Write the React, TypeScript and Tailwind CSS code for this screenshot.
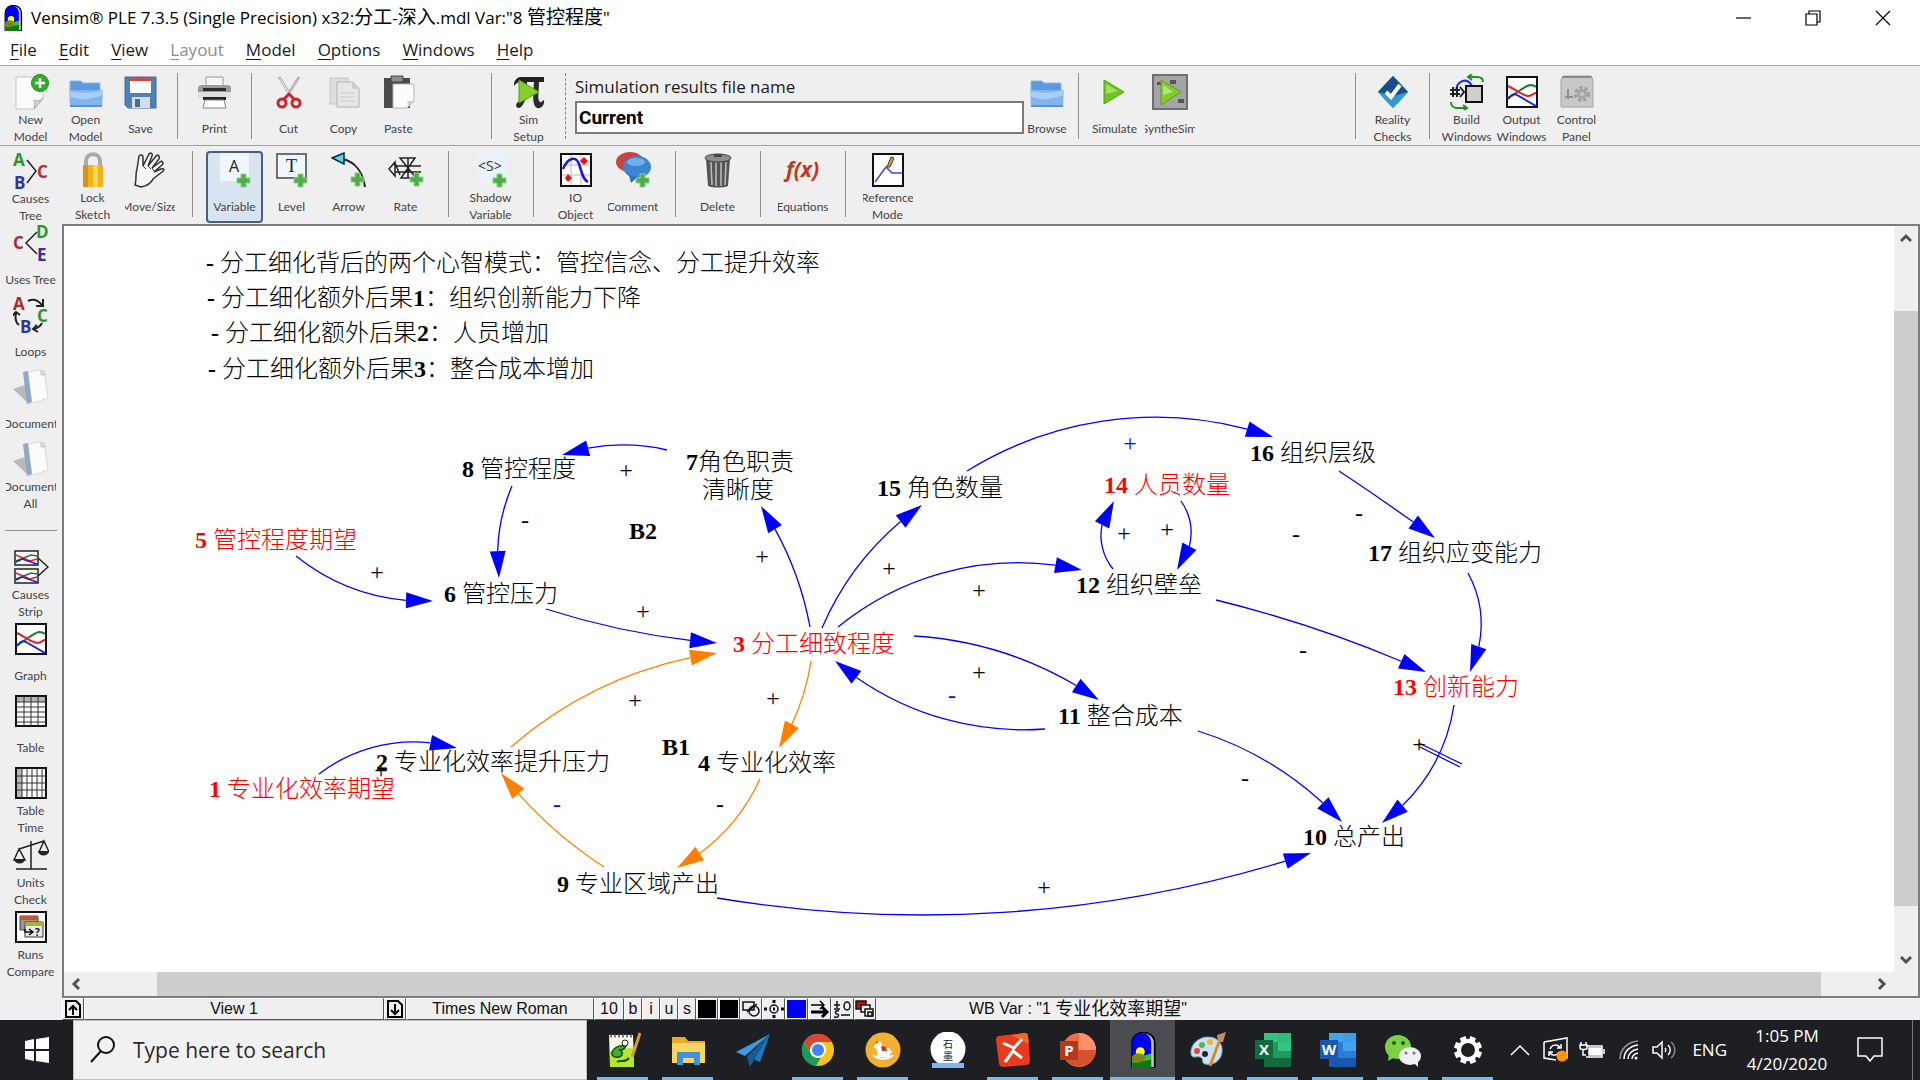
import type { ReactNode } from "react";
import clsx from "clsx";

const UI = "font-['Open_Sans','Noto_Sans_CJK_SC',sans-serif]";

/* ---------- ICONS ---------- */

const Plus = ({ x = 22, y = 24 }: { x?: number; y?: number }) => (
  <path
    transform={`translate(${x} ${y})`}
    d="M4 0h5v4h4v5H9v4H4V9H0V4h4z"
    fill="#4fae45"
    stroke="#8fd08a"
    strokeWidth="1"
  />
);

const Svg = ({ children, size = 36 }: { children: ReactNode; size?: number }) => (
  <svg width={size} height={size} viewBox="0 0 36 36" fill="none" aria-hidden="true" className="shrink-0">
    {children}
  </svg>
);

const NewIcon = () => (
  <Svg>
    <path d="M3 3h27v22l-9 10H3z" fill="#fbfbfb" stroke="#c4c4c4" />
    <path d="M21 35c1-4 1-7 0-9 3 1 6 1 9-2z" fill="#d5d5d5" stroke="#aaa" />
    <circle cx="27" cy="9" r="8.500" fill="#2fae2a" stroke="#1d8a1b" />
    <path d="M27 4v10M22 9h10" stroke="#fff" strokeWidth="2.500" />
  </Svg>
);

const FolderIcon = () => (
  <Svg>
    <path d="M2 7h11l2 2h17v12H2z" fill="#5a9be0" stroke="#8db9ea" />
    <path d="M1 16h34l-1 17H2z" fill="#82b4ee" />
    <path d="M1 17c12 3 22 2 34-1v5c-12 5-22 5-34 2z" fill="#a9cdf5" />
    <path d="M2 32h32" stroke="#5b93d6" strokeWidth="2" />
  </Svg>
);

const SaveIcon = () => (
  <Svg>
    <path d="M2 3h31v31H5l-3-3z" fill="#4f81b5" stroke="#3f6c9b" />
    <path d="M7 3h21v16H7z" fill="#fafafa" />
    <path d="M7 3h21v4H7z" fill="#c9484b" />
    <path d="M9 23h18v11H9z" fill="#d7dde4" />
    <path d="M12 25h5v8h-5z" fill="#4a6d92" />
  </Svg>
);

const PrintIcon = () => (
  <Svg>
    <path d="M9 3h17v10H9z" fill="#f5f5f5" stroke="#999" />
    <path d="M1 14c0-2 2-3 4-3h25c3 0 4 1 4 3v9H1z" fill="#9b9b9b" />
    <path d="M6 14h23v3H6z" fill="#2d2d2d" />
    <path d="M1 18h33v6H1z" fill="#dedede" />
    <path d="M6 23h23v3H6z" fill="#222" />
    <path d="M8 26h19l2 8H6z" fill="#fff" stroke="#888" />
  </Svg>
);

const CutIcon = () => (
  <Svg>
    <path d="M8 3l12 19M28 3L16 22" stroke="#b9b9b9" strokeWidth="3" />
    <path d="M9 5l11 17" stroke="#eee" strokeWidth="1" />
    <circle cx="11" cy="29" r="4" stroke="#c5282f" strokeWidth="3" />
    <circle cx="25" cy="29" r="4" stroke="#c5282f" strokeWidth="3" />
    <path d="M13 25l5-5 5 5" stroke="#c5282f" strokeWidth="3" />
  </Svg>
);

const CopyIcon = () => (
  <Svg>
    <path d="M4 4h18v26H4z" fill="#dedede" stroke="#c4c4c4" />
    <path d="M11 8h16l6 6v19H11z" fill="#e6e6e6" stroke="#b3b3b3" />
    <path d="M27 8v6h6" fill="#d4d4d4" stroke="#bbb" />
    <path d="M14 19h14M14 23h14M14 27h14" stroke="#cccccc" />
  </Svg>
);

const PasteIcon = () => (
  <Svg>
    <path d="M3 4h26v30H3z" fill="#4a4a4a" />
    <path d="M10 2h12v6H10z" fill="#8d8d8d" stroke="#444" />
    <path d="M12 10h21v17l-7 7H12z" fill="#fcfcfc" stroke="#b5b5b5" />
    <path d="M26 34c1-3 1-5 0-7h7z" fill="#cfcfcf" />
  </Svg>
);

const SimSetupIcon = () => (
  <Svg>
    <path d="M3 9c2-5 4-6 8-6h22v5H12c-4 0-6 0-9 4z" fill="#222" />
    <path d="M11 8h5c0 12-1 20-6 25-4 3-7-2-3-5 4-4 4-12 4-20zM23 8h5c0 10-2 18 1 20 2 1 3-2 4-2 1 5-3 9-7 8-5-2-4-14-3-26z" fill="#2b2b2b" />
    <path d="M8 6l20 12L8 29z" fill="#86cf2b" stroke="#5c9e18" />
  </Svg>
);

const PlayIcon = () => (
  <Svg>
    <path d="M7 6l20 12L7 30z" fill="#6fc41d" stroke="#52a012" />
    <path d="M9 10l12 7-12 3z" fill="#a4e05b" />
  </Svg>
);

const SyntheIcon = () => (
  <Svg>
    <path d="M1 1h34v34H1z" fill="#a5a5a5" stroke="#6f6f6f" strokeWidth="2" />
    <path d="M5 8h6v3H5zM18 6h6v4h-6zM26 25h6v4h-6z" fill="#555" />
    <path d="M9 6l20 12L9 31z" fill="#82cc2a" stroke="#5c9e18" />
    <path d="M11 11l10 7-10 3z" fill="#b4e777" />
  </Svg>
);

const RealityIcon = () => (
  <Svg>
    <path d="M18 2l15 16-15 16L3 18z" fill="#1d5f9d" stroke="#9fb3c6" />
    <path d="M3 18h30L18 34z" fill="#2f9cc9" />
    <path d="M3 18l15 4 15-4-15-16z" fill="#174f88" />
    <path d="M11 18l5 5 9-12" stroke="#fff" strokeWidth="4" />
  </Svg>
);

const BuildIcon = () => (
  <Svg>
    <path d="M7 17C8 6 18 3 23 12" stroke="#2a2af0" strokeWidth="2" />
    <path d="M1 16h10M1 20h10M4 13v10M8 13v10M11 13l4 5-4 5" stroke="#222" strokeWidth="2" />
    <path d="M17 12h16v16H17z" fill="#cfcfcf" stroke="#111" strokeWidth="2" />
    <path d="M34 8c0-4-3-5-6-5h-9m4-3l-4 3 4 3M2 28c0 4 3 6 6 6h10m-4-3l4 3-4 3" stroke="#1c941c" strokeWidth="2" />
  </Svg>
);

const GraphIcon = () => (
  <Svg>
    <path d="M3 3h30v30H3z" fill="#fff" stroke="#111" strokeWidth="2" />
    <path d="M4 24C12 20 20 12 26 11c3 0 5 1 6 2" stroke="#15802a" strokeWidth="2" />
    <path d="M4 12c7 3 13 9 20 10 3 0 6-3 8-3" stroke="#ec1c1c" strokeWidth="2" />
    <path d="M4 25c3-4 6-6 9-4l19 11" stroke="#1c1cec" strokeWidth="2" />
  </Svg>
);

const ControlIcon = () => (
  <Svg>
    <path d="M4 2h28l2 4v27H2V6z" fill="#c8c8c8" stroke="#a2a2a2" />
    <path d="M4 2h28l1 2H3z" fill="#888" />
    <circle cx="23" cy="20" r="6" stroke="#a0a0a0" strokeWidth="4" strokeDasharray="3 2" />
    <circle cx="23" cy="20" r="5" fill="#a6a6a6" />
    <circle cx="23" cy="20" r="2" fill="#c8c8c8" />
    <path d="M9 15v10M6 23h8" stroke="#909090" strokeWidth="2" />
  </Svg>
);

const letter = "font-['Open_Sans',sans-serif] font-bold text-[17px]";

const CausesTreeIcon = () => (
  <Svg>
    <text x="0" y="13" fill="#2d942d" className={letter}>A</text>
    <text x="1" y="36" fill="#33339c" className={letter}>B</text>
    <text x="24" y="25" fill="#b52c35" className={letter}>C</text>
    <path d="M14 7l9 11-9 12" stroke="#222" strokeWidth="1.500" />
  </Svg>
);

const UsesTreeIcon = () => (
  <Svg>
    <text x="0" y="24" fill="#a52c35" className={letter}>C</text>
    <text x="23" y="13" fill="#2d942d" className={letter}>D</text>
    <text x="24" y="36" fill="#33339c" className={letter}>E</text>
    <path d="M24 7L13 18l11 11" stroke="#222" strokeWidth="1.500" />
  </Svg>
);

const LoopsIcon = () => (
  <Svg>
    <text x="0" y="13" fill="#a52c35" className={letter}>A</text>
    <text x="24" y="25" fill="#2d942d" className={letter}>C</text>
    <text x="7" y="36" fill="#33339c" className={letter}>B</text>
    <path d="M15 4c6-3 10-1 14 4m1-6v7h-7M29 26c-2 4-4 5-8 6m3-4l-4 4 5 3M6 28c-4-3-4-7-3-12m-4 3l4-4 4 3" stroke="#222" strokeWidth="2" />
  </Svg>
);

const LockIcon = () => (
  <Svg>
    <path d="M11 16V9c0-9 14-9 14 0v7" stroke="#a9a9a9" strokeWidth="4" />
    <path d="M8 13h20v22H8z" fill="#efb41c" />
    <path d="M8 13h5v22H8z" fill="#d8920d" />
    <path d="M18 13h5v22h-5z" fill="#f9d659" />
  </Svg>
);

const HandIcon = () => (
  <Svg>
    <path
      d="M3 33c2-7 0-11 2-16l2-13c1-2 4-1 4 1v9l6-12c2-2 4 0 3 2l-4 10 8-10c2-2 4 0 3 3l-7 9 8-6c2-2 4 1 2 3l-8 7 7-3c3-1 4 1 1 3l-9 7c-2 5-7 7-12 8z"
      fill="#f6f6f6"
      stroke="#333"
      strokeWidth="1.500"
    />
    <path d="M11 14l3 3M16 14l3 3M20 16l2 3" stroke="#333" />
  </Svg>
);

const VariableIcon = () => (
  <Svg>
    <path d="M3 1h29v28H3z" fill="#eff6fe" />
    <text x="12" y="20" fill="#222" className="font-['Open_Sans',sans-serif] text-[16px]">A</text>
    <Plus x={20} y={22} />
  </Svg>
);

const LevelIcon = () => (
  <Svg>
    <path d="M3 2h29v24H3z" fill="#eef5fd" stroke="#444" strokeWidth="1.500" />
    <text x="12" y="20" fill="#222" className="font-['Liberation_Serif',serif] text-[18px]">T</text>
    <Plus x={20} y={22} />
  </Svg>
);

const ArrowIcon = () => (
  <Svg>
    <path d="M12 7c12 3 20 13 22 28" stroke="#222" strokeWidth="2" />
    <path d="M1 6l12-5v11z" fill="#4fe0e6" stroke="#123" strokeWidth="1.500" />
    <Plus x={20} y={21} />
  </Svg>
);

const RateIcon = () => (
  <Svg>
    <path d="M1 17l6-7v14zM7 14h26M7 20h26M12 6h15L13 26h15zM20 6v20M7 11l5 12" stroke="#222" strokeWidth="1.500" />
    <Plus x={22} y={21} />
  </Svg>
);

const ShadowIcon = () => (
  <Svg>
    <path d="M4 1h29v28H4z" fill="#e8f2fb" />
    <text x="5" y="19" fill="#333" className="font-['Open_Sans',sans-serif] text-[14px]">&lt;S&gt;</text>
    <Plus x={20} y={22} />
  </Svg>
);

const IoIcon = () => (
  <Svg>
    <path d="M3 2h30v32H3z" fill="#fff" stroke="#111" strokeWidth="2" />
    <path d="M4 13h28M4 23h28M13 3v30M23 3v30" stroke="#b8b8b8" />
    <path d="M5 17C10 5 18 4 21 12c3 9 4 16 9 18" stroke="#1818dd" strokeWidth="2.500" />
    <path d="M22 9l4-4 4 4-4 4zM7 26l3-4 4 4-4 4z" fill="#e31212" />
  </Svg>
);

const CommentIcon = () => (
  <Svg>
    <ellipse cx="15" cy="10" rx="14" ry="10" fill="#c9433f" />
    <ellipse cx="22" cy="15" rx="14" ry="11" fill="#3b86d0" />
    <path d="M14 23l2 8 7-6z" fill="#2f74bb" />
    <ellipse cx="21" cy="10" rx="9" ry="4" fill="#71b0e8" />
    <Plus x={21} y={22} />
  </Svg>
);

const TrashIcon = () => (
  <Svg>
    <path d="M6 7h24l-2 27c-5 2-15 2-20 0z" fill="#555" />
    <path d="M11 10l1 23M16 10v24M21 10v24M26 10l-1 23" stroke="#c0c0c0" strokeWidth="1.500" />
    <ellipse cx="18" cy="6" rx="13" ry="4" fill="#8d8d8d" stroke="#444" />
    <path d="M14 2h8v3h-8z" fill="#444" />
  </Svg>
);

const EquationsIcon = () => (
  <span className="font-['Open_Sans',sans-serif] text-[21px] font-bold italic text-[#c5361c]">f(x)</span>
);

const ReferenceIcon = () => (
  <Svg>
    <path d="M3 2h30v32H3z" fill="#fff" stroke="#111" strokeWidth="2" />
    <path d="M5 30l11-15 6 6h10" stroke="#4646d8" strokeWidth="1.500" />
    <path d="M17 15l4-10 3 1-4 9z" fill="#d79b45" stroke="#4a3520" />
  </Svg>
);

const DocIcon = () => (
  <Svg>
    <path d="M0 20l15-5v19z" fill="#b9b9b9" />
    <path d="M12 3l19-2 4 28-18 6z" fill="#fbfbfc" stroke="#d9d9dc" />
    <path d="M10 3l5-1 4 31-5 2z" fill="#8ea9c4" />
    <path d="M28 1l5 5h-5z" fill="#e2e2e2" stroke="#c5c5c5" />
  </Svg>
);

const StripIcon = () => (
  <Svg>
    {[2, 20].map((y) => (
      <g key={y} transform={`translate(0 ${y})`}>
        <path d="M2 0h23v14H2z" fill="#fff" stroke="#222" strokeWidth="1.500" />
        <path d="M3 10l15-6 6 1" stroke="#15802a" strokeWidth="1.500" />
        <path d="M3 4l14 6 7-2" stroke="#ec1c1c" strokeWidth="1.500" />
        <path d="M3 11l6-3 15 5" stroke="#1c1cec" strokeWidth="1.500" />
      </g>
    ))}
    <path d="M25 9l10 9-10 9" stroke="#222" strokeWidth="1.500" />
  </Svg>
);

const TableIcon = ({ time = false }: { time?: boolean }) => (
  <Svg>
    <path d="M3 3h30v30H3z" fill="#fff" stroke="#111" strokeWidth="2" />
    <path d={time ? "M4 4h5v28H4z" : "M4 4h28v5H4z"} fill="#b5b5b5" />
    <path
      d={time ? "M9 3v30M14 3v30M19 3v30M24 3v30M29 3v30M3 11h30M3 18h30M3 25h30" : "M3 9h30M3 14h30M3 19h30M3 24h30M3 29h30M11 3v30M18 3v30M25 3v30"}
      stroke="#333"
    />
  </Svg>
);

const UnitsIcon = () => (
  <Svg>
    <path d="M18 4v28M3 32h31M6 12l25-8M6 12L1 23h11zM31 4l-5 11h10z" stroke="#222" strokeWidth="1.500" />
    <path d="M1 22h11c-1 6-10 6-11 0zM25 14h11c-1 6-10 6-11 0z" fill="#222" />
  </Svg>
);

const RunsIcon = () => (
  <Svg>
    <path d="M3 3h30v30H3z" fill="#fff" stroke="#111" strokeWidth="2" />
    <path d="M7 7h18v14H7z" fill="#999" stroke="#444" />
    <path d="M7 7h18v4H7z" fill="#c4572f" />
    <path d="M12 13h18v15H12z" fill="#e8e8e8" stroke="#333" />
    <path d="M12 13h18v4H12z" fill="#a5b52b" />
    <path d="M12 20v3h7m-3-3l4 3-4 3" stroke="#111" strokeWidth="1.500" />
    <text x="22" y="27" fill="#111" className="font-['Open_Sans',sans-serif] text-[10px] font-bold">?</text>
  </Svg>
);

const VensimIcon = ({ className }: { className?: string }) => (
  <svg viewBox="0 0 28 40" className={className} aria-hidden="true">
    <path d="M2 40V12C2-3 27-3 27 12v28z" fill="#c4c4c4" stroke="#000" strokeWidth="2" />
    <path d="M2 40V12C2-2 23-2 23 12v28z" fill="#0000f5" />
    <circle cx="11" cy="22" r="5" fill="#ffff1a" />
    <path d="M2 27c6-6 10-3 14-1l7-2v16H2z" fill="#35c62a" />
    <path d="M2 27c6-4 11-3 15 2-4 5-10 6-15 4z" fill="#86801a" />
    <path d="M2 34c8 1 12-3 21-3v9H2z" fill="#0b7a12" />
  </svg>
);

/* ---------- TOOLBAR PARTS ---------- */

type Tool = { icon: ReactNode; lines: string[]; w?: string; active?: boolean };

const ToolButton = ({ icon, lines, w = "w-[55px]", active }: Tool) => (
  <button
    type="button"
    className={clsx(
      "flex h-[72px] shrink-0 flex-col items-center",
      w,
      active && "rounded-sm bg-[#d9e4f1] outline-2 -outline-offset-2 outline-[#4a5f86]"
    )}
  >
    <span className="flex h-[38px] items-center justify-center">{icon}</span>
    <span className="flex h-[34px] w-[50px] flex-col items-center justify-center overflow-hidden font-['Lato',sans-serif] text-[12px] leading-[17px] text-[#444]">
      {lines.map((line) => (
        <span key={line} className="whitespace-nowrap">
          {line}
        </span>
      ))}
    </span>
  </button>
);

const Sep = ({ w = "w-[19px]", dotted = false }: { w?: string; dotted?: boolean }) => (
  <div className={clsx("flex h-[66px] shrink-0 justify-center", w)}>
    <div className={clsx("h-full border-l", dotted ? "border-dashed border-[#888]" : "border-[#8f8f8f]")} />
  </div>
);

const sideTop: Tool[] = [
  { icon: <CausesTreeIcon />, lines: ["Causes", "Tree"] },
  { icon: <UsesTreeIcon />, lines: ["Uses Tree"] },
  { icon: <LoopsIcon />, lines: ["Loops"] },
  { icon: <DocIcon />, lines: ["Document"] },
  { icon: <DocIcon />, lines: ["Document", "All"] },
];

const sideBottom: Tool[] = [
  { icon: <StripIcon />, lines: ["Causes", "Strip"] },
  { icon: <GraphIcon />, lines: ["Graph"] },
  { icon: <TableIcon />, lines: ["Table"] },
  { icon: <TableIcon time />, lines: ["Table", "Time"] },
  { icon: <UnitsIcon />, lines: ["Units", "Check"] },
  { icon: <RunsIcon />, lines: ["Runs", "Compare"] },
];

const sketchGroups: Tool[][] = [
  [
    { icon: <LockIcon />, lines: ["Lock", "Sketch"] },
    { icon: <HandIcon />, lines: ["Move/Size"] },
  ],
  [
    { icon: <VariableIcon />, lines: ["Variable"], active: true },
    { icon: <LevelIcon />, lines: ["Level"] },
    { icon: <ArrowIcon />, lines: ["Arrow"] },
    { icon: <RateIcon />, lines: ["Rate"] },
  ],
  [{ icon: <ShadowIcon />, lines: ["Shadow", "Variable"] }],
  [
    { icon: <IoIcon />, lines: ["IO", "Object"] },
    { icon: <CommentIcon />, lines: ["Comment"] },
  ],
  [{ icon: <TrashIcon />, lines: ["Delete"] }],
  [{ icon: <EquationsIcon />, lines: ["Equations"] }],
  [{ icon: <ReferenceIcon />, lines: ["Reference", "Mode"] }],
];

/* ---------- DIAGRAM ---------- */

// x = left edge, y = middle of the text line
type Label = { x: number; y: number; num?: string; text: string; red?: boolean };

const labels: Label[] = [
  { x: 142, y: 37, num: "- ", text: "分工细化背后的两个心智模式：管控信念、分工提升效率" },
  { x: 398, y: 243, num: "8 ", text: "管控程度" },
  { x: 622, y: 236, num: "7", text: "角色职责" },
  { x: 638, y: 264, text: "清晰度" },
  { x: 131, y: 314, num: "5 ", text: "管控程度期望", red: true },
  { x: 565, y: 305, num: "B2", text: "" },
  { x: 380, y: 368, num: "6 ", text: "管控压力" },
  { x: 669, y: 418, num: "3 ", text: "分工细致程度", red: true },
  { x: 312, y: 536, num: "2 ", text: "专业化效率提升压力" },
  { x: 145, y: 563, num: "1 ", text: "专业化效率期望", red: true },
  { x: 598, y: 521, num: "B1", text: "" },
  { x: 634, y: 537, num: "4 ", text: "专业化效率" },
  { x: 493, y: 658, num: "9 ", text: "专业区域产出" },
  { x: 813, y: 262, num: "15 ", text: "角色数量" },
  { x: 1186, y: 227, num: "16 ", text: "组织层级" },
  { x: 1040, y: 259, num: "14 ", text: "人员数量", red: true },
  { x: 1012, y: 359, num: "12 ", text: "组织壁垒" },
  { x: 1304, y: 327, num: "17 ", text: "组织应变能力" },
  { x: 1329, y: 461, num: "13 ", text: "创新能力", red: true },
  { x: 994, y: 490, num: "11 ", text: "整合成本" },
  { x: 1239, y: 611, num: "10 ", text: "总产出" },
];

const notes = [
  { x: 143, y: 72, n: "1", text: "组织创新能力下降" },
  { x: 147, y: 107, n: "2", text: "人员增加" },
  { x: 144, y: 143, n: "3", text: "整合成本增加" },
];

type Sign = [x: number, y: number, text: string, blue?: boolean];

const signs: Sign[] = [
  [562, 244, "+"],
  [461, 294, "-"],
  [698, 330, "+"],
  [313, 346, "+"],
  [579, 385, "+"],
  [571, 474, "+"],
  [709, 472, "+"],
  [493, 578, "-", true],
  [656, 578, "-"],
  [317, 544, "+"],
  [825, 342, "+"],
  [1066, 217, "+", true],
  [1060, 307, "+"],
  [1103, 303, "+"],
  [915, 364, "+"],
  [915, 446, "+"],
  [1295, 287, "-"],
  [1232, 308, "-"],
  [1239, 424, "-"],
  [888, 469, "-", true],
  [1181, 552, "-"],
  [980, 661, "+"],
  [1355, 518, "+"],
];

// start, a point on the way, tip
type Edge = [number, number, number, number, number, number];

const blueEdges: Edge[] = [
  [603, 224, 562, 219, 498, 229],
  [448, 260, 436, 301, 435, 352],
  [232, 330, 276, 357, 369, 375],
  [482, 383, 567, 405, 653, 417],
  [255, 548, 324, 518, 393, 522],
  [746, 401, 726, 334, 697, 280],
  [758, 402, 795, 339, 858, 279],
  [774, 401, 882, 346, 1018, 344],
  [903, 245, 1056, 193, 1209, 211],
  [1049, 343, 1037, 311, 1050, 275],
  [1117, 275, 1127, 307, 1113, 344],
  [1275, 245, 1328, 281, 1371, 312],
  [1404, 347, 1417, 394, 1406, 446],
  [1152, 374, 1255, 404, 1362, 446],
  [850, 410, 940, 427, 1035, 474],
  [981, 503, 877, 492, 771, 435],
  [1134, 505, 1202, 535, 1278, 596],
  [1390, 479, 1376, 526, 1318, 597],
  [653, 672, 858, 689, 1247, 627],
];

const orangeEdges: Edge[] = [
  [447, 521, 533, 464, 653, 427],
  [747, 435, 734, 484, 715, 522],
  [696, 553, 669, 596, 613, 642],
  [540, 641, 480, 594, 437, 547],
];

// circular arc through the three points, with the head laid along its last stretch
function arc([x1, y1, x2, y2, x3, y3]: Edge) {
  const d = 2 * (x1 * (y2 - y3) + x2 * (y3 - y1) + x3 * (y1 - y2));
  const a = x1 * x1 + y1 * y1;
  const b = x2 * x2 + y2 * y2;
  const c = x3 * x3 + y3 * y3;
  const cx = (a * (y2 - y3) + b * (y3 - y1) + c * (y1 - y2)) / d;
  const cy = (a * (x3 - x2) + b * (x1 - x3) + c * (x2 - x1)) / d;
  const r = Math.hypot(x1 - cx, y1 - cy);
  const sweep = d > 0 ? 1 : 0;
  const back = Math.atan2(y3 - cy, x3 - cx) - ((sweep ? 1 : -1) * 27) / r;
  const bx = cx + r * Math.cos(back);
  const by = cy + r * Math.sin(back);
  const len = Math.hypot(x3 - bx, y3 - by);
  const nx = (-(y3 - by) / len) * 8;
  const ny = ((x3 - bx) / len) * 8;
  return {
    line: `M${x1} ${y1}A${r} ${r} 0 0 ${sweep} ${bx} ${by}`,
    head: `${x3},${y3} ${bx + nx},${by + ny} ${bx - nx},${by - ny}`,
  };
}

const Arrows = ({ edges, color }: { edges: Edge[]; color: string }) => (
  <g>
    {edges.map((edge) => {
      const { line, head } = arc(edge);
      return (
        <g key={edge.join()}>
          <path d={line} fill="none" stroke={color} strokeWidth="1.300" />
          <polygon points={head} fill={color} />
        </g>
      );
    })}
  </g>
);

const Diagram = () => (
  <div className="relative min-w-0 flex-1 overflow-hidden bg-white font-['Liberation_Serif','Noto_Sans_CJK_SC',serif] text-[24px] font-light leading-[28px] text-black">
    <svg width="1830" height="746" className="absolute left-0 top-0" aria-hidden="true">
      <Arrows edges={blueEdges} color="#0000ff" />
      <Arrows edges={orangeEdges} color="#ff8000" />
      <path d="M1355 517l43 21M1356 521l40 20" stroke="#0000ff" strokeWidth="1.300" />
    </svg>
    {labels.map((l) => (
      <span
        key={l.x + l.text}
        className={clsx("absolute -translate-y-1/2 whitespace-pre", l.red && "text-[#ff0000]")}
        style={{ left: l.x, top: l.y }}
      >
        <b className="font-bold">{l.num}</b>
        {l.text}
      </span>
    ))}
    {notes.map((n) => (
      <span key={n.n} className="absolute -translate-y-1/2 whitespace-pre" style={{ left: n.x, top: n.y }}>
        <b className="font-bold">- </b>分工细化额外后果<b className="font-bold">{n.n}</b>：{n.text}
      </span>
    ))}
    {signs.map(([x, y, text, blue]) => (
      <span
        key={`${x}-${y}`}
        className={clsx("absolute -translate-x-1/2 -translate-y-1/2", blue && "text-[#0000ff]")}
        style={{ left: x, top: y }}
      >
        {text}
      </span>
    ))}
  </div>
);

/* ---------- STATUS BAR ---------- */

const cell = "flex h-full shrink-0 items-center justify-center border border-t-white border-l-white border-r-[#555] border-b-[#555]";

const StatusBar = () => (
  <div className="flex h-[22px] items-stretch overflow-hidden bg-[#efefef] font-['Liberation_Sans','Noto_Sans_CJK_SC',sans-serif] text-[16px] text-[#111]">
    <button type="button" aria-label="Previous view" className={clsx(cell, "w-[22px]")}>
      <svg width="18" height="20" viewBox="0 0 18 20" fill="none" stroke="#000" strokeWidth="2">
        <path d="M2 2h10l4 4v12H2zM9 16V8M5 11l4-4 4 4" />
      </svg>
    </button>
    <button type="button" className={clsx(cell, "w-[300px]")}>View 1</button>
    <button type="button" aria-label="Next view" className={clsx(cell, "w-[22px]")}>
      <svg width="18" height="20" viewBox="0 0 18 20" fill="none" stroke="#000" strokeWidth="2">
        <path d="M2 2h10l4 4v12H2zM9 5v8M5 11l4 4 4-4" />
      </svg>
    </button>
    <button type="button" className={clsx(cell, "w-[188px]")}>Times New Roman</button>
    <button type="button" className={clsx(cell, "w-[30px]")}>10</button>
    {["b", "i", "u", "s"].map((c) => (
      <button key={c} type="button" className={clsx(cell, "w-[18px]")}>{c}</button>
    ))}
    <button type="button" aria-label="Text color" className={clsx(cell, "w-[22px] p-px")}>
      <span className="h-full w-full bg-black" />
    </button>
    <button type="button" aria-label="Shape color" className={clsx(cell, "w-[22px] p-px")}>
      <span className="h-full w-full bg-black" />
    </button>
    <button type="button" aria-label="Shape" className={clsx(cell, "w-[22px]")}>
      <svg width="20" height="18" viewBox="0 0 20 18" fill="none" stroke="#111" strokeWidth="1.500">
        <path d="M2 2h11v8H2zM6 12l10-8" />
        <circle cx="13" cy="11" r="5" />
      </svg>
    </button>
    <button type="button" aria-label="Position" className={clsx(cell, "w-[23px]")}>
      <svg width="20" height="18" viewBox="0 0 20 18" fill="none" stroke="#111" strokeWidth="1.500">
        <circle cx="10" cy="9" r="4" />
        <path d="M9 9h2M10 0v3M10 15v3M0 9h3M17 9h3" strokeWidth="3" />
      </svg>
    </button>
    <button type="button" aria-label="Arrow color" className={clsx(cell, "w-[23px] p-px")}>
      <span className="h-full w-full bg-[#0000ff]" />
    </button>
    <button type="button" aria-label="Arrow width" className={clsx(cell, "w-[23px]")}>
      <svg width="20" height="18" viewBox="0 0 20 18" fill="none" stroke="#000">
        <path d="M1 5h12M10 1l4 4-4 4" strokeWidth="1.500" />
        <path d="M1 12h14M12 7l5 5-5 5" strokeWidth="3" />
      </svg>
    </button>
    <button type="button" aria-label="Polarity" className={clsx(cell, "w-[23px]")}>
      <svg width="20" height="18" viewBox="0 0 20 18" fill="none" stroke="#111" strokeWidth="1.500">
        <path d="M1 5h6M4 1v7M1 9h6M8 15h9M6 11c-5-1-4 3-2 3s3 4-3 3" />
        <ellipse cx="14" cy="6" rx="3" ry="4" />
      </svg>
    </button>
    <button type="button" aria-label="Layers" className={clsx(cell, "w-[22px]")}>
      <svg width="20" height="18" viewBox="0 0 20 18" stroke="#111" strokeWidth="1.500">
        <path d="M1 1h10v8H1z" fill="#e00000" />
        <path d="M6 5h9v7H6z" fill="#fff" />
        <path d="M10 9h8v7h-8z" fill="#fff" />
        <path d="M13 12h4v4h-4z" fill="#ddd" />
      </svg>
    </button>
    <span className="ml-[93px] flex items-center whitespace-pre">
      WB Var : "1 <span className="text-[18px]">专业化效率期望</span>"
    </span>
  </div>
);

/* ---------- TASKBAR ---------- */

const Office = ({ l, dark, mid, light }: { l: string; dark: string; mid: string; light: string }) => (
  <Svg>
    <path d="M9 1h27v34H9z" fill={mid} />
    <path d="M9 1h14v9H9zM23 10h13v9H23z" fill={light} />
    <path d="M23 1h13v9H23z" fill={light} opacity=".8" />
    <path d="M9 26h27v9H9z" fill={dark} />
    <path d="M0 8h18v19H0z" fill={dark} />
    <text x="9" y="23" textAnchor="middle" fill="#fff" className="font-['Open_Sans',sans-serif] text-[15px] font-bold">{l}</text>
  </Svg>
);

const apps: { name: string; line?: boolean; icon: ReactNode }[] = [
  {
    name: "Notepad++",
    line: true,
    icon: (
      <Svg>
        <path d="M4 3h24l1 32H5z" fill="#f7f7e6" />
        <path d="M5 20l24-5v20H5z" fill="#b9e62c" />
        <path d="M5 4h22" stroke="#777" strokeWidth="3" strokeDasharray="2 2" />
        <path d="M7 20c3-6 8-7 14-6-1 3-4 4-7 4 5 1 4 6 0 7s-8-1-7-5z" fill="#3fae32" stroke="#14531a" strokeWidth="1.500" />
        <path d="M12 30c4-3 7 2 12-4" stroke="#14531a" strokeWidth="2" />
        <circle cx="20" cy="11" r="3" fill="#fff" stroke="#222" />
        <path d="M35 1l-8 24" stroke="#d89a3c" strokeWidth="3" />
      </Svg>
    ),
  },
  {
    name: "File Explorer",
    line: true,
    icon: (
      <Svg>
        <path d="M2 5h13l3 4h17v22H2z" fill="#e9a922" />
        <path d="M2 11h33v20H2z" fill="#fcd462" />
        <path d="M7 33V20h23v13h-6v-7H13v7z" fill="#3e94d6" />
      </Svg>
    ),
  },
  {
    name: "Mail",
    icon: (
      <Svg>
        <path d="M35 2L1 20l9 4z" fill="#3a9be0" />
        <path d="M35 2L12 25l13 5z" fill="#2176bd" />
        <path d="M12 25l23-23-17 28-3 5z" fill="#185b98" />
      </Svg>
    ),
  },
  {
    name: "Chrome",
    line: true,
    icon: (
      <Svg>
        <circle cx="18" cy="18" r="16" fill="#fbc116" />
        <path d="M4 10a16 16 0 0 1 28 0H18a8 8 0 0 0-7 12z" fill="#dc4437" />
        <path d="M4 10l7 12a8 8 0 0 0 10 3l-5 9A16 16 0 0 1 4 10z" fill="#1a9c58" />
        <circle cx="18" cy="18" r="8" fill="#fff" />
        <circle cx="18" cy="18" r="6" fill="#4285f4" />
      </Svg>
    ),
  },
  {
    name: "Rocking horse",
    line: true,
    icon: (
      <Svg>
        <circle cx="18" cy="18" r="17.500" fill="#f3b02e" />
        <path d="M9 14l4-5 3 1 2 6h6l3 4-2 2v3H12v-8l-3-1z" fill="#fff" />
        <path d="M16 14l5 1 1 4h-5zM10 12l2-3 2 1z" fill="#d3352c" />
        <path d="M8 23c5 5 15 5 20 0" stroke="#fff" strokeWidth="2" />
      </Svg>
    ),
  },
  {
    name: "Shimo",
    icon: (
      <Svg>
        <circle cx="18" cy="17" r="17.500" fill="#fff" />
        <text x="18" y="16" textAnchor="middle" fill="#222" className="font-['Noto_Sans_CJK_SC',sans-serif] text-[10px]">石</text>
        <text x="18" y="28" textAnchor="middle" fill="#222" className="font-['Noto_Sans_CJK_SC',sans-serif] text-[10px]">墨</text>
        <path d="M2 31h32v5H2z" fill="#7db5f0" />
      </Svg>
    ),
  },
  {
    name: "XMind",
    line: true,
    icon: (
      <Svg>
        <path d="M4 4l25-3c3 0 4 1 4 3l2 24c0 3-1 4-3 5L8 35c-2 0-3-1-4-3L1 8c0-2 1-4 3-4z" fill="#ea3a1c" />
        <path d="M16 3l13-2c3 0 4 1 4 3l1 8z" fill="#f2682a" />
        <path d="M8 11l11 5 8-9M10 30l8-11 9 7" stroke="#fff" strokeWidth="3" />
      </Svg>
    ),
  },
  {
    name: "PowerPoint",
    line: true,
    icon: (
      <Svg>
        <circle cx="19" cy="18" r="17" fill="#ed6c47" />
        <path d="M19 1a17 17 0 0 1 17 17H19z" fill="#ff8f6b" />
        <path d="M36 18a17 17 0 0 1-33 5l16-5z" fill="#d35230" />
        <path d="M0 9h18v19H0z" fill="#b7391c" />
        <text x="9" y="24" textAnchor="middle" fill="#fff" className="font-['Open_Sans',sans-serif] text-[15px] font-bold">P</text>
      </Svg>
    ),
  },
  { name: "Vensim", line: true, icon: <VensimIcon className="h-[36px] w-[30px]" /> },
  {
    name: "Paint",
    line: true,
    icon: (
      <Svg>
        <path d="M18 5c10 0 15 7 14 15-1 9-9 14-17 12-4-1-1-6-5-7-3-1-8 2-9-3C0 13 8 5 18 5z" fill="#c9e2f4" stroke="#7aa5c5" />
        <circle cx="7" cy="19" r="3" fill="#e2483d" />
        <circle cx="12" cy="13" r="3" fill="#58b947" />
        <circle cx="20" cy="10" r="3" fill="#f5b82e" />
        <circle cx="15" cy="22" r="3" fill="#222834" />
        <path d="M20 34l9-24" stroke="#dc852a" strokeWidth="3" />
        <path d="M28 10l-1-7 9-3-3 10z" fill="#c98c55" />
      </Svg>
    ),
  },
  { name: "Excel", line: true, icon: <Office l="X" dark="#116b3c" mid="#1f9a5c" light="#33c481" /> },
  { name: "Word", line: true, icon: <Office l="W" dark="#1b56b0" mid="#2b7cd3" light="#41a5ee" /> },
  {
    name: "WeChat",
    line: true,
    icon: (
      <Svg>
        <ellipse cx="13" cy="15" rx="13" ry="12" fill="#7bd144" />
        <path d="M4 22l-1 7 7-4z" fill="#7bd144" />
        <circle cx="9" cy="11" r="2" fill="#245c12" />
        <circle cx="18" cy="11" r="2" fill="#245c12" />
        <ellipse cx="25" cy="24" rx="11" ry="9" fill="#f1f1f1" />
        <path d="M29 31l4 4v-6z" fill="#f1f1f1" />
        <circle cx="21" cy="21" r="1.500" fill="#777" />
        <circle cx="29" cy="21" r="1.500" fill="#777" />
      </Svg>
    ),
  },
  {
    name: "Settings",
    line: true,
    icon: (
      <Svg>
        <circle cx="18" cy="18" r="9" stroke="#fff" strokeWidth="4" />
        {[22, 67, 112, 157, 202, 247, 292, 337].map((deg) => (
          <path key={deg} d="M15 4h6v5h-6z" fill="#fff" transform={`rotate(${deg} 18 18)`} />
        ))}
      </Svg>
    ),
  },
];

const Taskbar = () => (
  <footer className="flex h-[60px] shrink-0 bg-[#1e1f23] text-white">
    <button type="button" aria-label="Start" className="flex w-[73px] items-center justify-center">
      <svg width="26" height="26" viewBox="0 0 26 26" fill="#fff">
        <path d="M1 4l9-2v10H1zM12 2l13-2v12H12zM1 14h9v10l-9-2zM12 14h13v12l-13-2z" />
      </svg>
    </button>
    <label className="flex w-[514px] items-center gap-[17px] border border-[#bdbdbd] bg-[#f1f1f1] pl-4">
      <svg width="26" height="28" viewBox="0 0 26 28" fill="none" stroke="#111" strokeWidth="2" className="shrink-0">
        <circle cx="16" cy="9" r="8" />
        <path d="M11 15L1 26" />
      </svg>
      <input
        aria-label="Search"
        placeholder="Type here to search"
        className="w-full min-w-0 bg-transparent pt-[2px] text-[21px] text-[#2a2a2a] outline-none placeholder:text-[#2a2a2a]"
      />
    </label>
    <div className="flex pl-[3px]">
      {apps.map((app) => (
        <button
          key={app.name}
          type="button"
          aria-label={app.name}
          className={clsx("relative flex w-[65px] items-center justify-center", app.name === "Vensim" && "bg-[#4b4c50]")}
        >
          {app.icon}
          {app.line && (
            <span className={clsx("absolute bottom-0 h-[3px] bg-[#76b9ed]", app.name === "Vensim" ? "w-full" : "w-[51px]")} />
          )}
        </button>
      ))}
    </div>
    <div className="ml-auto flex items-center">
      <svg width="20" height="12" viewBox="0 0 20 12" fill="none" stroke="#fff" strokeWidth="1.500">
        <path d="M1 11l9-9 9 9" />
      </svg>
      <svg width="28" height="26" viewBox="0 0 28 26" fill="none" stroke="#fff" strokeWidth="1.500" className="ml-[13px]">
        <path d="M1 5l23-4v20H18M1 5v16l12 2" />
        <path d="M7 12c2-5 8-5 10-1m1-4v4h-4M16 15c-2 4-7 4-9 1m-1 3v-4h4" />
        <circle cx="19" cy="19" r="5.500" fill="#ff9800" stroke="none" />
      </svg>
      <svg width="26" height="20" viewBox="0 0 26 20" fill="none" stroke="#fff" strokeWidth="1.500" className="ml-[8px]">
        <path d="M2 2v4M7 2v4M1 5h7v3c0 2-7 2-7 0zM4 10v5h3M7 6h16v11H7" />
        <path d="M10 8h12v7H10z" fill="#fff" />
        <path d="M25 9v5" />
      </svg>
      <svg width="20" height="20" viewBox="0 0 20 20" fill="none" stroke="#fff" strokeWidth="1.500" className="ml-[14px]">
        <path d="M1 19C1 9 9 2 19 1" stroke="#999" />
        <path d="M5 19C5 11 11 6 19 5M9 19c0-5 4-9 10-10M13 19c0-3 2-5 6-6" />
        <circle cx="17" cy="18" r="1.500" fill="#fff" stroke="none" />
      </svg>
      <svg width="24" height="20" viewBox="0 0 24 20" fill="none" stroke="#fff" strokeWidth="1.500" className="ml-[13px]">
        <path d="M1 7h4l5-5v16l-5-5H1zM13 8c1 1 1 3 0 4M16 5c3 3 3 7 0 10" />
        <path d="M19 2c5 4 5 12 0 16" stroke="#888" />
      </svg>
      <span className="ml-[16px] text-[17px]">ENG</span>
      <time className="ml-[16px] w-[88px] text-center text-[17px] leading-[28px]">
        1:05 PM
        <br />
        4/20/2020
      </time>
      <svg width="26" height="26" viewBox="0 0 26 26" fill="none" stroke="#fff" strokeWidth="1.500" className="ml-[26px]">
        <path d="M1 1h24v18h-8l-4 5-4-5H1z" />
      </svg>
      <div className="ml-[29px] mr-[7px] h-[60px] w-px bg-[#777]" />
    </div>
  </footer>
);

/* ---------- PAGE ---------- */

const menus = ["File", "Edit", "View", "Layout", "Model", "Options", "Windows", "Help"];

const Chevron = ({ d }: { d: string }) => (
  <svg width="12" height="12" viewBox="0 0 12 12" fill="none" stroke="#505050" strokeWidth="3" aria-hidden="true">
    <path d={d} />
  </svg>
);

export default function App() {
  return (
    <div className={clsx("flex h-screen flex-col overflow-hidden bg-[#efefef] text-black", UI)}>
      {/* TITLE BAR */}
      <header className="flex h-[35px] shrink-0 items-center bg-white pl-[3px] pr-[2px]">
        <VensimIcon className="h-[26px] w-[20px]" />
        <h1 className="ml-2 whitespace-nowrap text-[17px] leading-[28px]">
          Vensim® PLE 7.3.5 (Single Precision) x32:<span className="text-[19px]">分工</span>-
          <span className="text-[19px]">深入</span>.mdl Var:"8 <span className="text-[19px]">管控程度</span>"
        </h1>
        <div className="ml-auto flex h-full">
          {["Minimize", "Restore", "Close"].map((name) => (
            <button key={name} type="button" aria-label={name} className="flex w-[70px] items-center justify-center">
              <svg width="16" height="16" viewBox="0 0 16 16" fill="none" stroke="#000" strokeWidth="1.200">
                {name === "Minimize" && <path d="M1 8h15" />}
                {name === "Restore" && <path d="M1 4h11v11H1zM4 4V1h11v11h-3" />}
                {name === "Close" && <path d="M1 1l14 14M15 1L1 15" />}
              </svg>
            </button>
          ))}
        </div>
      </header>

      {/* MENU */}
      <nav className="flex h-[31px] shrink-0 items-center gap-[22px] border-b border-[#a8a8a8] bg-white pl-[10px] text-[17px]">
        {menus.map((m) => (
          <a key={m} href="#" className={m === "Layout" ? "text-[#8d8d8d]" : "text-[#1a1a1a]"}>
            <span className="underline underline-offset-3">{m[0]}</span>
            {m.slice(1)}
          </a>
        ))}
      </nav>

      {/* MAIN TOOLBAR */}
      <div className="flex h-[80px] shrink-0 border-b border-[#a0a0a0] pl-[3px] pt-[7px]">
        <ToolButton icon={<NewIcon />} lines={["New", "Model"]} />
        <ToolButton icon={<FolderIcon />} lines={["Open", "Model"]} />
        <ToolButton icon={<SaveIcon />} lines={["Save"]} />
        <Sep />
        <ToolButton icon={<PrintIcon />} lines={["Print"]} />
        <Sep />
        <ToolButton icon={<CutIcon />} lines={["Cut"]} />
        <ToolButton icon={<CopyIcon />} lines={["Copy"]} />
        <ToolButton icon={<PasteIcon />} lines={["Paste"]} />
        <div className="w-[56px] shrink-0" />
        <Sep />
        <ToolButton icon={<SimSetupIcon />} lines={["Sim", "Setup"]} />
        <Sep dotted />
        <div className="flex w-[449px] shrink-0 flex-col">
          <label htmlFor="run" className="text-[17px] leading-[28px] text-[#1a1a1a]">Simulation results file name</label>
          <input
            id="run"
            defaultValue="Current"
            className="h-[33px] border-2 border-[#7a7a7a] bg-white px-[2px] font-['Roboto',sans-serif] text-[19px] font-bold outline-none"
          />
        </div>
        <ToolButton icon={<FolderIcon />} lines={["Browse"]} w="w-[46px]" />
        <Sep w="w-[17px]" />
        <ToolButton icon={<PlayIcon />} lines={["Simulate"]} />
        <ToolButton icon={<SyntheIcon />} lines={["SyntheSim"]} />
        <div className="w-[149px] shrink-0" />
        <Sep />
        <ToolButton icon={<RealityIcon />} lines={["Reality", "Checks"]} />
        <Sep />
        <ToolButton icon={<BuildIcon />} lines={["Build", "Windows"]} />
        <ToolButton icon={<GraphIcon />} lines={["Output", "Windows"]} />
        <ToolButton icon={<ControlIcon />} lines={["Control", "Panel"]} />
      </div>

      <div className="flex min-h-0 flex-1">
        {/* ANALYSIS TOOLS */}
        <aside className="flex w-[61px] shrink-0 flex-col items-center pt-[6px]">
          {sideTop.map((t, i) => (
            <ToolButton key={i} {...t} />
          ))}
          <div className="flex h-[36px] w-[52px] shrink-0 items-center">
            <hr className="w-full border-[#8f8f8f]" />
          </div>
          {sideBottom.map((t, i) => (
            <ToolButton key={i} {...t} />
          ))}
        </aside>

        <div className="flex min-w-0 flex-1 flex-col pl-px">
          {/* SKETCH TOOLS */}
          <div className="flex h-[78px] shrink-0 pl-[2px] pt-[5px]">
            {sketchGroups.map((group, i) => (
              <div key={i} className="flex">
                {i > 0 && <Sep w="w-[28px]" />}
                {group.map((t) => (
                  <ToolButton key={t.lines[0]} {...t} w="w-[57px]" />
                ))}
              </div>
            ))}
          </div>

          {/* SKETCH */}
          <main className="flex min-h-0 flex-1 flex-col border-2 border-[#7d7d7d]">
            <div className="flex min-h-0 flex-1">
              <Diagram />
              <div className="flex w-6 shrink-0 flex-col items-center justify-between bg-[#efefef]">
                <button type="button" aria-label="Scroll up" className="flex h-6 items-center">
                  <Chevron d="M1 9l5-5 5 5" />
                </button>
                <div className="mb-[42px] mt-[61px] w-full flex-1 bg-[#cdcdcd]" />
                <button type="button" aria-label="Scroll down" className="flex h-6 items-center">
                  <Chevron d="M1 3l5 5 5-5" />
                </button>
              </div>
            </div>
            <div className="flex h-6 shrink-0 items-center bg-[#efefef] pr-6">
              <button type="button" aria-label="Scroll left" className="flex w-6 justify-center">
                <Chevron d="M9 1L4 6l5 5" />
              </button>
              <div className="ml-[69px] mr-[49px] h-full flex-1 bg-[#cdcdcd]" />
              <button type="button" aria-label="Scroll right" className="flex w-6 justify-center">
                <Chevron d="M3 1l5 5-5 5" />
              </button>
            </div>
          </main>

          <StatusBar />
        </div>
      </div>

      <Taskbar />
    </div>
  );
}
